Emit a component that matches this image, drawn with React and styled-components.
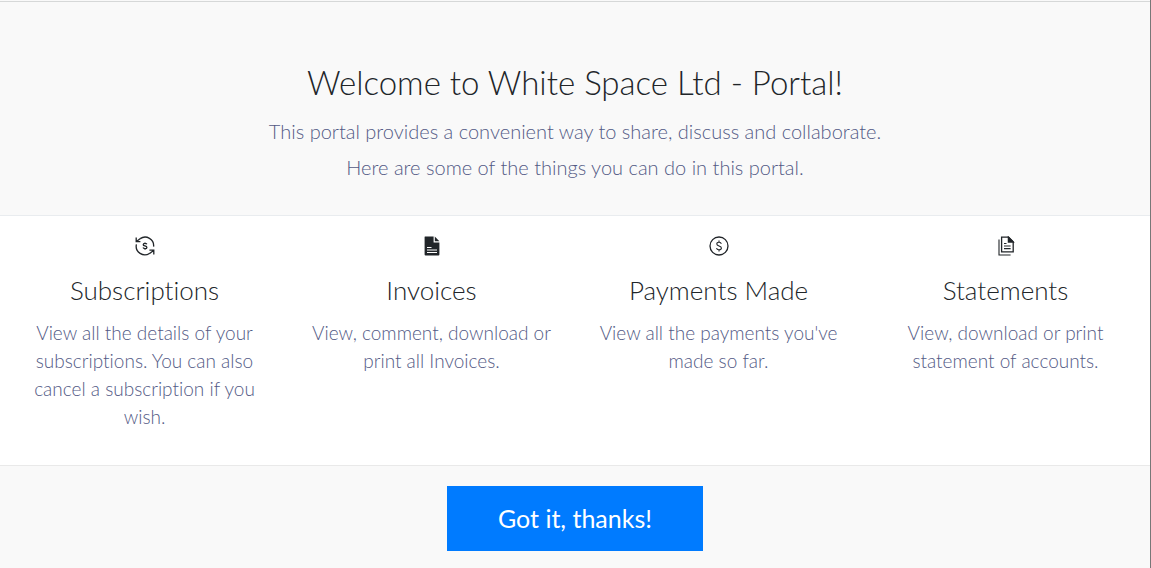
import React from "react";
import styled, { createGlobalStyle } from "styled-components";

const SubscriptionIcon = () => (
  <svg width="20" height="20" viewBox="0 0 20 20" fill="none" stroke="currentColor" strokeWidth="1.3" aria-hidden="true">
    <path d="M5.2 2.6A8.6 8.6 0 0 1 18.6 10.6" />
    <path d="M14.8 17.2A8.6 8.6 0 0 1 1.4 8.4" />
    <path d="M1.2 1.4V5.6H5.4M1.4 5.4L5.4 2.4" />
    <path d="M18.8 18.6V14.2H14.4M18.6 14.4L14.6 17.4" />
    <path d="M11.9 8.3C11.5 7.6 10.9 7.4 10 7.4C8.9 7.4 8.2 7.9 8.2 8.7C8.2 10.4 11.9 9.5 11.9 11.4C11.9 12.2 11.1 12.7 10 12.7C9 12.7 8.3 12.3 8 11.6M10 6.4V7.4M10 12.7V13.7" />
  </svg>
);

const InvoiceIcon = () => (
  <svg width="20" height="20" viewBox="0 0 20 20" aria-hidden="true">
    <path fill="currentColor" d="M3 .5H11.6V6.4H17.4V18.6Q17.4 19.6 16.4 19.6H3.6Q2.6 19.6 2.6 18.6V1Q2.6.5 3 .5Z" />
    <path fill="currentColor" d="M12.8.6L17.4 5.2H12.8Z" />
    <path stroke="#ffffff" strokeWidth="1.1" d="M5 11.5H9.5M5 14H15M5 16.5H15" />
  </svg>
);

const PaymentIcon = () => (
  <svg width="20" height="20" viewBox="0 0 20 20" fill="none" stroke="currentColor" strokeWidth="1.3" aria-hidden="true">
    <circle cx="10" cy="10" r="9" />
    <path strokeWidth="1.1" d="M12.3 7.9C12.1 6.8 11.3 6.2 10 6.2C8.7 6.2 7.8 6.9 7.8 8C7.8 10.6 12.4 9.3 12.4 12C12.4 13.1 11.4 13.8 10 13.8C8.6 13.8 7.7 13.1 7.6 12M10 4.6V6.2M10 13.8V15.4" />
  </svg>
);

const StatementIcon = () => (
  <svg width="20" height="20" viewBox="0 0 20 20" fill="none" stroke="currentColor" strokeWidth="1.3" aria-hidden="true">
    <path d="M5.6 1.2H12.6L17.2 5.8V15.8H5.6Z" />
    <path fill="currentColor" d="M12.4 1.2V6H17.2Z" />
    <path d="M3 3.6V19H14.6" strokeWidth="1.1" />
    <path d="M8 7.5H10.5M8 10H14.6M8 12.6H14.6" strokeWidth="1.1" />
  </svg>
);

const features = [
  {
    title: "Subscriptions",
    text: "View all the details of your subscriptions. You can also cancel a subscription if you wish.",
    Icon: SubscriptionIcon,
  },
  {
    title: "Invoices",
    text: "View, comment, download or print all Invoices.",
    Icon: InvoiceIcon,
  },
  {
    title: "Payments Made",
    text: "View all the payments you've made so far.",
    Icon: PaymentIcon,
  },
  {
    title: "Statements",
    text: "View, download or print statement of accounts.",
    Icon: StatementIcon,
  },
];

const App = () => {
  return (
    <>
      <GlobalStyle />
      <Welcome>
        <Header>
          <Title>Welcome to White Space Ltd - Portal!</Title>
          <Lead>This portal provides a convenient way to share, discuss and collaborate.</Lead>
          <Lead>Here are some of the things you can do in this portal.</Lead>
        </Header>
        <FeatureList>
          {features.map(({ title, text, Icon }) => (
            <Feature key={title}>
              <Icon />
              <FeatureTitle>{title}</FeatureTitle>
              <FeatureText>{text}</FeatureText>
            </Feature>
          ))}
        </FeatureList>
        <Footer>
          <ConfirmButton type="button">Got it, thanks!</ConfirmButton>
        </Footer>
      </Welcome>
    </>
  );
};

export default App;

const GlobalStyle = createGlobalStyle`
  * {
    box-sizing: border-box;
  }

  body {
    margin: 0;
    background-color: #f9f9f9;
    color: #212529;
    font-family: Lato, "Open Sans", sans-serif;
    font-weight: 300;
    font-variant-ligatures: none;
  }
`;

const Welcome = styled.main`
  display: flex;
  flex-direction: column;
  min-height: 100vh;
  padding-top: 1px;
  border-right: 1px solid #777777;
  text-align: center;
`;

const Header = styled.header`
  padding: 60px 16px 30px;
  border-top: 1px solid #d6d8d8;
  border-bottom: 1px solid #e9ecef;
`;

const Title = styled.h1`
  margin: 0 0 11px;
  font-size: 33px;
  font-weight: 300;
  line-height: 40px;
`;

const Lead = styled.p`
  margin: 0;
  color: #535a85;
  font-size: 20px;
  line-height: 36px;
`;

const FeatureList = styled.section`
  display: grid;
  grid-template-columns: repeat(4, 1fr);
  padding: 20px 1px 34px;
  border-bottom: 1px solid #e9e9e9;
  background-color: #ffffff;
`;

const Feature = styled.article`
  padding: 0 16px;

  svg {
    display: block;
    margin: 0 auto;
  }
`;

const FeatureTitle = styled.h2`
  margin: 18px 0 13px;
  font-size: 26px;
  font-weight: 300;
  line-height: 32px;
`;

const FeatureText = styled.p`
  margin: 0;
  color: #535a85;
  font-size: 19px;
  line-height: 28px;
`;

const Footer = styled.footer`
  padding: 20px 16px 17px;
`;

const ConfirmButton = styled.button`
  padding: 16px 51px;
  border: 0;
  background-color: #007bff;
  color: #ffffff;
  font-family: inherit;
  font-size: 25px;
  line-height: 33px;
  cursor: pointer;
`;
